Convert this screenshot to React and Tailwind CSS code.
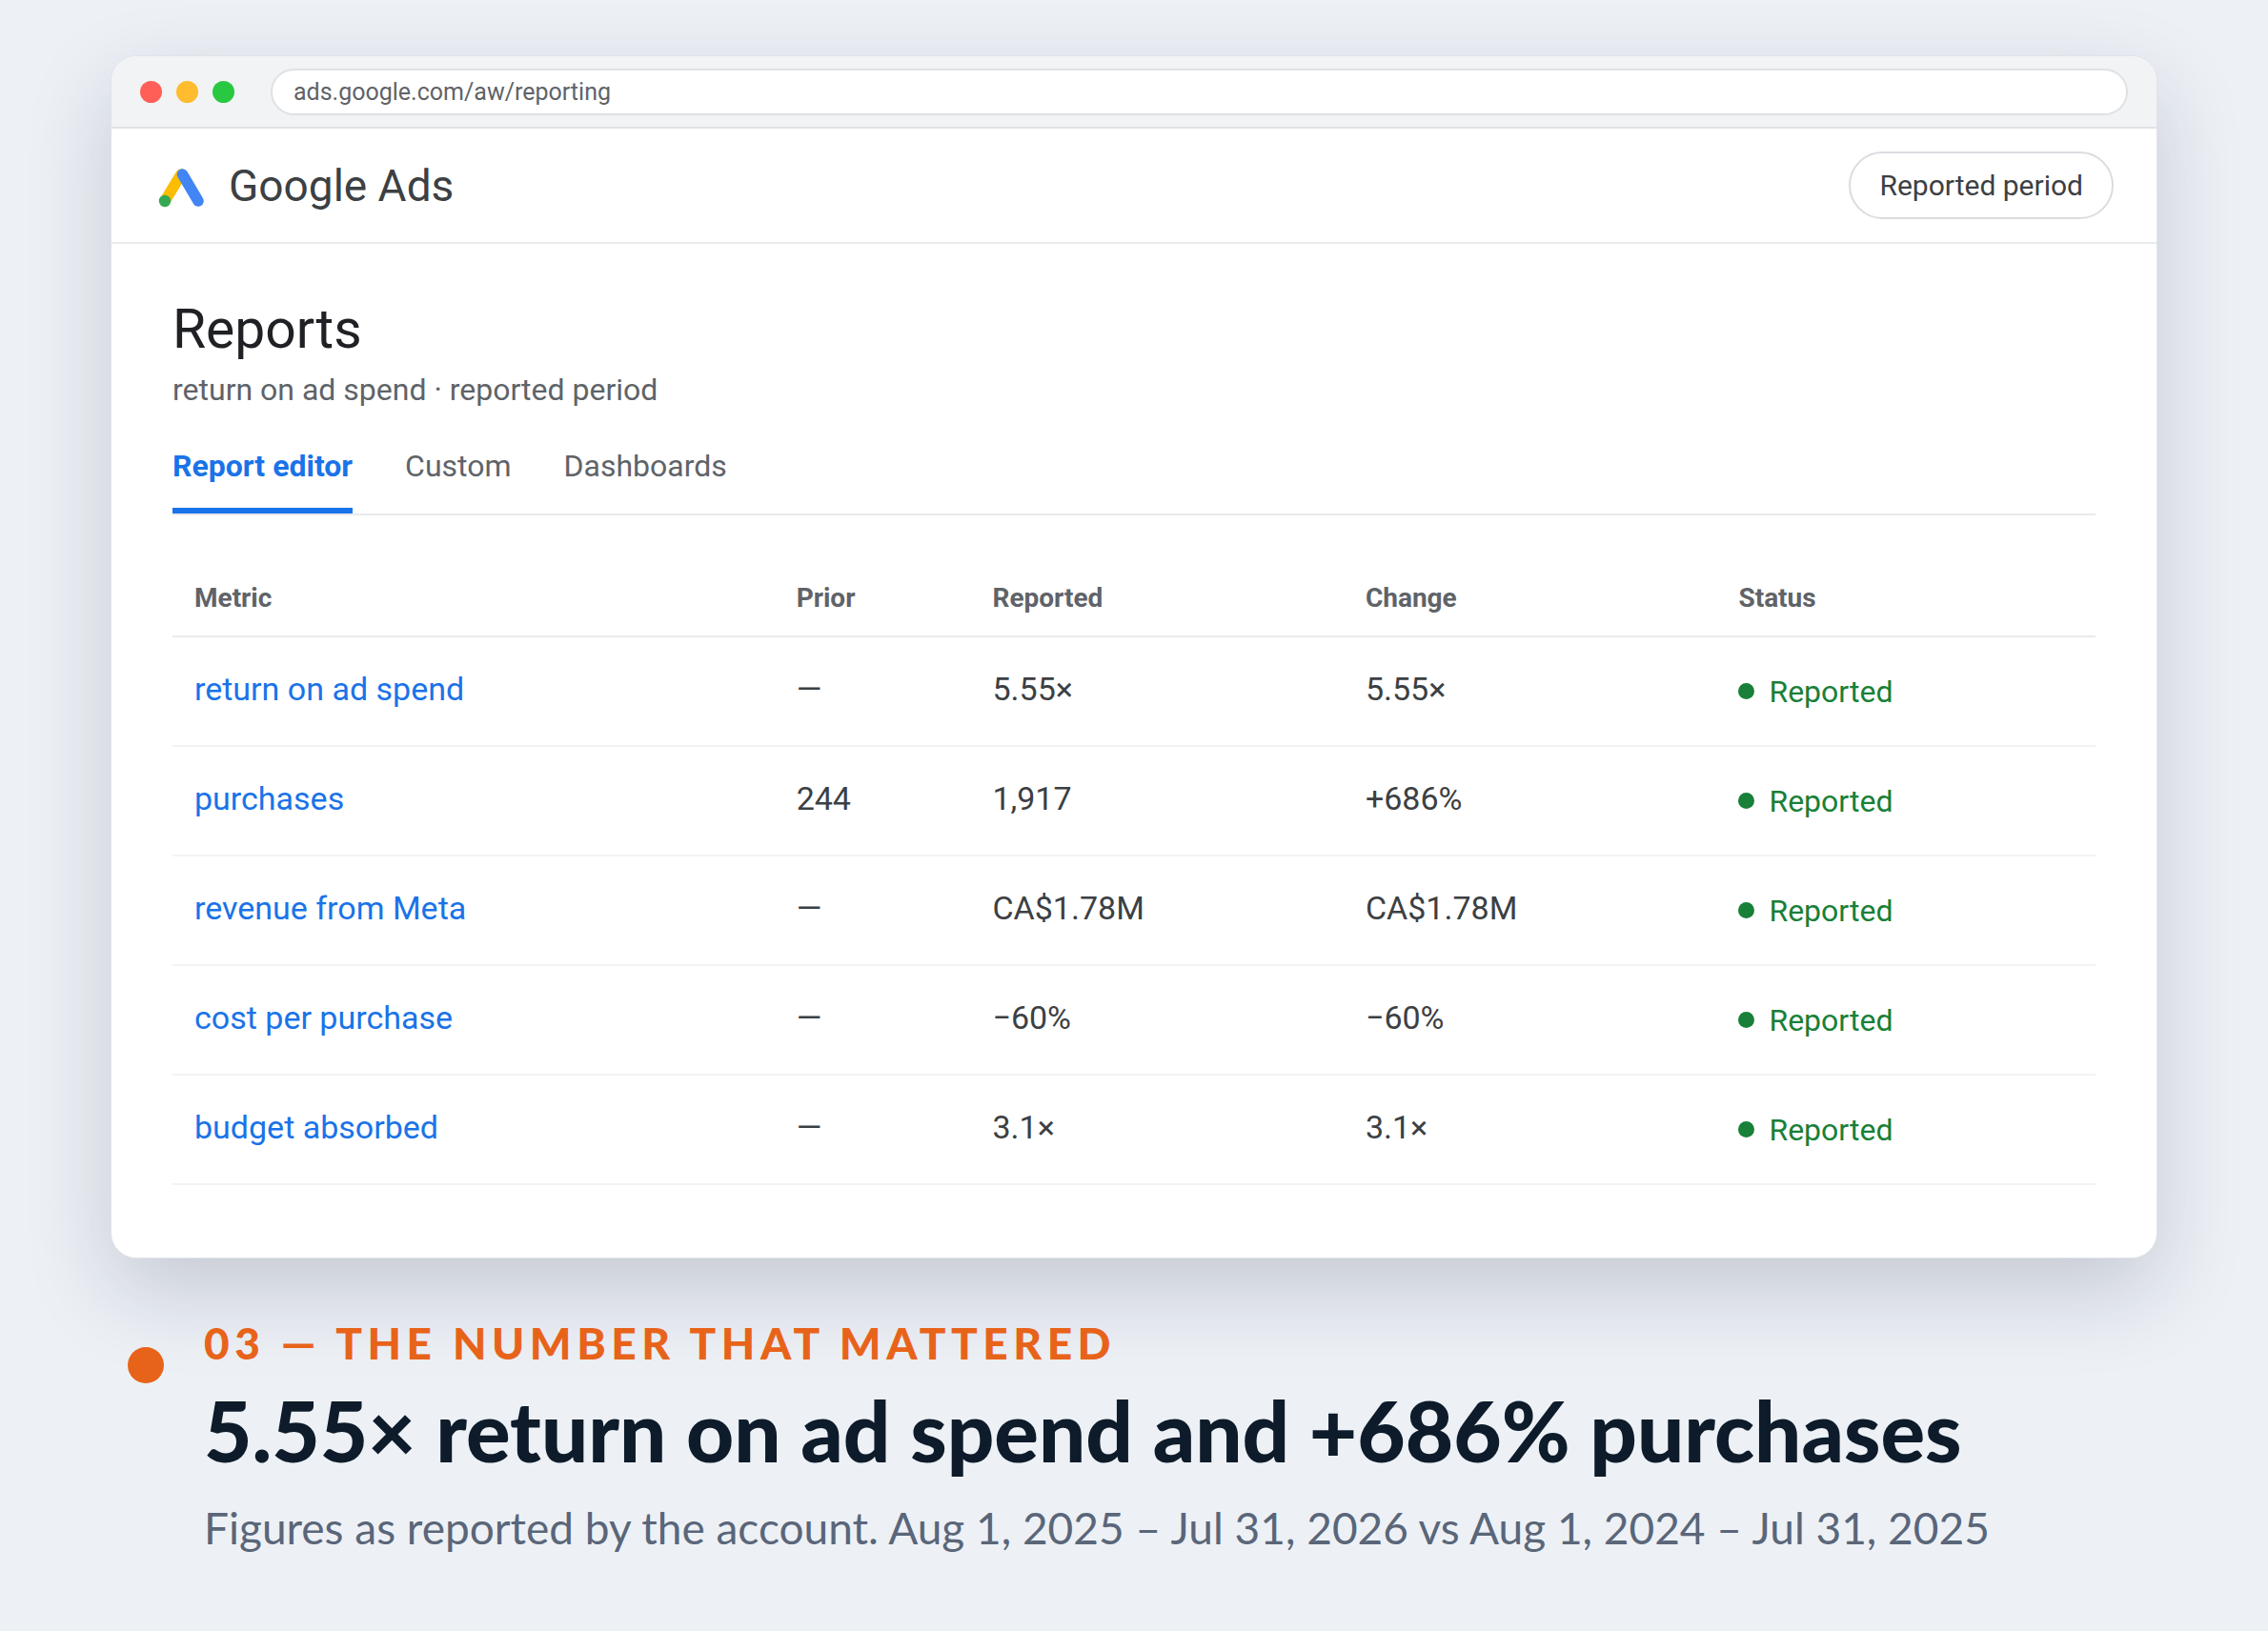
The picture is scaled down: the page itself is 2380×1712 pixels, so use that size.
const rows = [
  ["return on ad spend", "—", "5.55×", "5.55×"],
  ["purchases", "244", "1,917", "+686%"],
  ["revenue from Meta", "—", "CA$1.78M", "CA$1.78M"],
  ["cost per purchase", "—", "−60%", "−60%"],
  ["budget absorbed", "—", "3.1×", "3.1×"],
];

const columns = [
  { label: "Metric", width: "w-[31.3%]" },
  { label: "Prior", width: "w-[10.2%]" },
  { label: "Reported", width: "w-[19.4%]" },
  { label: "Change", width: "w-[19.4%]" },
  { label: "Status", width: "" },
];

function AdsLogo() {
  return (
    <svg viewBox="0 0 50 50" className="size-[50px]" fill="none" strokeLinecap="round" aria-hidden="true">
      <path d="M25 13 8 41" stroke="#fbbc04" strokeWidth="11.500" />
      <path d="M26.500 13 43 41" stroke="#4285f4" strokeWidth="11.500" />
      <circle cx="8" cy="41" r="6.200" fill="#34a853" />
    </svg>
  );
}

function BrowserBar() {
  return (
    <div className="flex items-center border-b-2 border-[#dfe1e5] bg-[#f1f3f4] px-[30px] pt-[13px] pb-3">
      <div className="flex gap-[15px]">
        <span className="size-[23px] rounded-full bg-[#ff5f57]" />
        <span className="size-[23px] rounded-full bg-[#febc2e]" />
        <span className="size-[23px] rounded-full bg-[#28c840]" />
      </div>
      <input
        type="text"
        aria-label="Address"
        readOnly
        value="ads.google.com/aw/reporting"
        className="ml-[38px] h-[49px] min-w-0 flex-1 rounded-full border-2 border-[#dfe1e5] bg-white px-[22px] text-[25px] text-[#5f6368] outline-none"
      />
    </div>
  );
}

function ReportTable() {
  return (
    <table className="mt-[47px] w-full table-fixed border-collapse text-left">
      <thead>
        <tr className="border-b-2 border-[#e8eaed]">
          {columns.map((c) => (
            <th key={c.label} scope="col" className={`${c.width} h-[80px] px-[23px] text-[28px] font-bold text-[#5f6368]`}>
              {c.label}
            </th>
          ))}
        </tr>
      </thead>
      <tbody>
        {rows.map(([metric, prior, reported, change]) => (
          <tr key={metric} className="h-[115px] border-b-2 border-[#f1f3f4] text-[34px] text-[#3c4043]">
            <td className="px-[23px] pb-1">
              <a href="#" className="text-[#1a73e8]">{metric}</a>
            </td>
            <td className="px-[23px] pb-1">{prior}</td>
            <td className="px-[23px] pb-1">{reported}</td>
            <td className="px-[23px] pb-1">{change}</td>
            <td className="px-[23px]">
              <span className="flex items-center gap-[15px] text-[32px] text-[#188038]">
                <span className="size-[17px] rounded-full bg-[#188038]" />
                Reported
              </span>
            </td>
          </tr>
        ))}
      </tbody>
    </table>
  );
}

export default function App() {
  return (
    <div className="min-h-screen bg-[#edf1f6] px-[116px] pt-[58px] pb-16">
      <main className="overflow-hidden rounded-[27px] border border-[#dfe3ea] bg-white font-[Roboto,sans-serif] shadow-[0_34px_90px_rgba(15,20,50,0.18)]">
        <BrowserBar />
        <header className="flex items-center justify-between border-b-2 border-[#e8eaed] pr-[45px] pl-12 py-6">
          <div className="flex items-center gap-[25px]">
            <AdsLogo />
            <span className="text-[46px] leading-[54px] text-[#3c4043]">Google Ads</span>
          </div>
          <button type="button" className="h-[71px] rounded-full border-2 border-[#dadce0] px-[30px] text-[30px] text-[#3c4043]">
            Reported period
          </button>
        </header>
        <section className="px-16 pt-[54px] pb-[76px]">
          <h1 className="text-[57px] leading-[72px] text-[#202124]">Reports</h1>
          <p className="mt-[7px] text-[32px] leading-[40px] text-[#5f6368]">return on ad spend · reported period</p>
          <nav className="mt-9 flex gap-[55px] border-b-2 border-[#e8eaed] text-[32px] leading-[40px] text-[#5f6368]">
            <button type="button" className="border-b-[6px] border-[#1a73e8] pt-1 pb-6 font-bold text-[#1a73e8]">Report editor</button>
            <button type="button" className="border-b-[6px] border-transparent pt-1 pb-6">Custom</button>
            <button type="button" className="border-b-[6px] border-transparent pt-1 pb-6">Dashboards</button>
          </nav>
          <ReportTable />
        </section>
      </main>
      <section className="mt-[61px] flex items-start gap-[42px] px-[18px] font-[Lato,sans-serif]">
        <span className="mt-8 size-[38px] shrink-0 rounded-full bg-[#e8631a]" />
        <div>
          <p className="text-[46px] leading-[56px] font-black tracking-[0.12em] text-[#e8631a]">03 — THE NUMBER THAT MATTERED</p>
          <h2 className="mt-4 text-[87px] leading-[96px] font-black text-[#0d1b2a]">
            5.55× return on ad spend and +686% purchases
          </h2>
          <p className="mt-6 text-[46px] leading-[60px] text-[#5a6679]">
            Figures as reported by the account. Aug 1, 2025 – Jul 31, 2026 vs Aug 1, 2024 – Jul 31, 2025
          </p>
        </div>
      </section>
    </div>
  );
}
